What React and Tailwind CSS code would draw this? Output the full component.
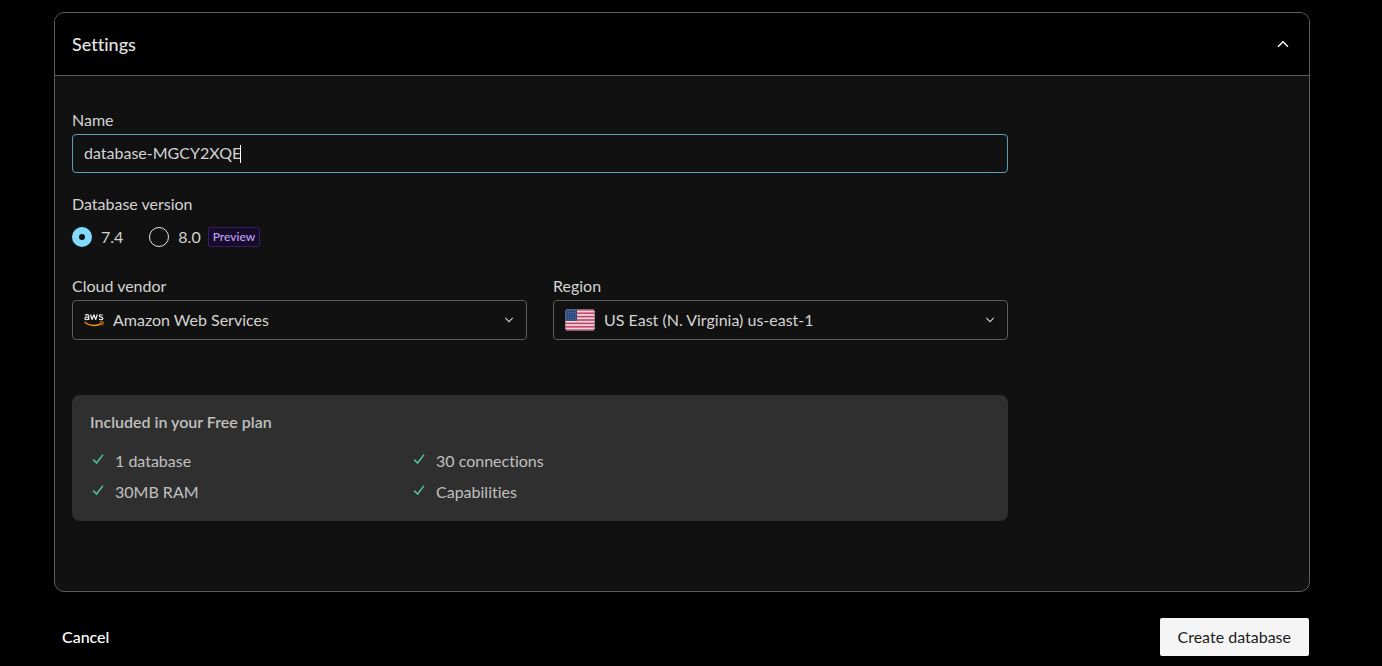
import { useState } from "react";

const INCLUDED = ["1 database", "30 connections", "30MB RAM", "Capabilities"];

function ChevronIcon({ className }) {
  return (
    <svg className={className} viewBox="0 0 12 8" fill="none" stroke="currentColor" aria-hidden="true">
      <path d="M1 1.2 6 6.2 11 1.2" strokeWidth="1.4" />
    </svg>
  );
}

function CheckIcon() {
  return (
    <svg className="mb-1 h-3 w-3" viewBox="0 0 12 12" fill="none" stroke="#4fc3a1" aria-hidden="true">
      <path d="M1.2 6.6 4.6 10 11 1.6" strokeWidth="1.5" />
    </svg>
  );
}

function AwsLogo() {
  return (
    <svg className="h-3.5 w-5" viewBox="0 0 40 28" fill="none" aria-hidden="true">
      <g stroke="#f2f2f2" strokeWidth="2.3" strokeLinejoin="round">
        <path d="M2 4.6C5 2.6 9.6 2.6 9.6 6.4V14M9.6 8.6C5.6 7.6 1.8 8 1.8 11C1.8 14.6 7.6 14.2 9.6 10.6" />
        <path d="M13 3 16.2 13 19.8 3.6 23.4 13 26.6 3" />
        <path d="M37.4 4.4C34.6 2.8 30.6 3.2 30.6 5.8C30.6 9 37.8 7.6 37.8 10.8C37.8 14 32.6 14 29.8 12.2" />
      </g>
      <path d="M1 18.6C11 26.6 26 27 35.6 20.6" stroke="#f79400" strokeWidth="2.8" />
      <path d="M31.6 18.4C34.4 17.4 37.4 17.2 38.4 18.2C39 19.6 38 22.6 36.2 24.8" stroke="#f79400" strokeWidth="2" />
    </svg>
  );
}

function UsFlag() {
  const stripes = [0, 2, 4, 6, 8, 10, 12];
  const stars = [];
  for (let row = 0; row < 5; row += 1) {
    for (let col = 0; col < 5; col += 1) {
      stars.push([1.6 + col * 2.2, 1.3 + row * 2.2]);
    }
  }

  return (
    <svg className="h-[22px] w-[30px] rounded-sm" viewBox="0 0 30 22" preserveAspectRatio="none" aria-hidden="true">
      <rect width="30" height="22" fill="#eedde3" />
      {stripes.map((n) => (
        <rect key={n} y={(n * 22) / 13} width="30" height={22 / 13} fill="#c4466a" />
      ))}
      <rect width="12" height="11.8" fill="#2b4a7e" />
      {stars.map(([x, y]) => (
        <circle key={`${x}-${y}`} cx={x} cy={y} r="0.4" fill="#9fb2d2" />
      ))}
      <rect x="0.5" y="0.5" width="29" height="21" rx="3.5" fill="none" stroke="#6f6f74" strokeOpacity="0.6" />
    </svg>
  );
}

function SelectField({ id, label, icon, option, selectClass }) {
  return (
    <div>
      <label htmlFor={id} className="block pb-[3px] leading-[22px]">
        {label}
      </label>
      <div className="relative">
        <span className="pointer-events-none absolute inset-y-0 left-3 flex items-center">{icon}</span>
        <select
          id={id}
          className={`h-10 w-full appearance-none rounded-sm border border-[#5c5c5c] bg-[#111111] pr-10 pb-px outline-none ${selectClass}`}
        >
          <option>{option}</option>
        </select>
        <span className="pointer-events-none absolute inset-y-0 right-3 flex w-3 items-center justify-center">
          <ChevronIcon className="h-1.5 w-2.5" />
        </span>
      </div>
    </div>
  );
}

function VersionRadio({ value, checked, onChange }) {
  return (
    <label className="flex items-center gap-[9px]">
      <input
        type="radio"
        name="version"
        value={value}
        checked={checked}
        onChange={onChange}
        className="h-5 w-5 appearance-none rounded-full border border-[#e8e8e8] checked:border-[7px] checked:border-[#80dbff] checked:bg-[#111111]"
      />
      {value}
    </label>
  );
}

function App() {
  const [name, setName] = useState("database-MGCY2XQE");
  const [version, setVersion] = useState("7.4");
  const [isOpen, setIsOpen] = useState(true);

  return (
    <main className="min-h-screen bg-black pt-3 pr-[72px] pb-2 pl-[54px] font-['Lato',sans-serif] text-base text-[#d4d4d4] [font-variant-ligatures:none]">
      <section className="overflow-hidden rounded-[10px] border border-[#5c5c5c] bg-[#111111]">
        <header className="flex h-[63px] items-center justify-between border-b border-[#5c5c5c] bg-black pr-5 pl-[17px]">
          <h2 className="text-lg font-medium text-[#e4e4e4]">Settings</h2>
          <button type="button" aria-label="Toggle settings" onClick={() => setIsOpen(!isOpen)}>
            <ChevronIcon className="h-2 w-3 rotate-180 text-white" />
          </button>
        </header>

        {isOpen && (
          <div className="px-[17px] pt-[33px] pb-[70px]">
            <div className="max-w-[936px]">
              <label htmlFor="name" className="block pb-[3px] leading-[22px]">
                Name
              </label>
              <div className="flex h-[39px] items-center rounded-sm border border-[#5b9fb5] pl-[11px]">
                <input
                  id="name"
                  value={name}
                  onChange={(event) => setName(event.target.value)}
                  className="field-sizing-content bg-transparent pb-0.5 caret-transparent outline-none"
                />
                <span className="-ml-px h-[18px] w-px bg-white" />
              </div>

              <fieldset className="mt-[18px]">
                <legend className="leading-[25px]">Database version</legend>
                <div className="mt-[9px] flex h-6 items-center">
                  <VersionRadio value="7.4" checked={version === "7.4"} onChange={() => setVersion("7.4")} />
                  <div className="ml-[26px] flex items-center gap-[7px]">
                    <VersionRadio value="8.0" checked={version === "8.0"} onChange={() => setVersion("8.0")} />
                    <span className="rounded-xs border border-[#34205e] bg-[#160b2b] px-1 text-xs leading-[18px] font-medium text-[#c4a4f5]">
                      Preview
                    </span>
                  </div>
                </div>
              </fieldset>

              <div className="mt-[26px] grid grid-cols-2 gap-[26px]">
                <SelectField
                  id="vendor"
                  label="Cloud vendor"
                  icon={<AwsLogo />}
                  option="Amazon Web Services"
                  selectClass="pl-10"
                />
                <SelectField
                  id="region"
                  label="Region"
                  icon={<UsFlag />}
                  option="US East (N. Virginia) us-east-1"
                  selectClass="pl-[50px]"
                />
              </div>

              <div className="mt-[55px] rounded-lg bg-[#2f2f2f] px-[18px] pt-[15px] pb-[17px] text-[#c0c0c0]">
                <h3 className="font-semibold">Included in your Free plan</h3>
                <ul className="mt-[15px] grid grid-cols-[321px_321px] gap-y-[7px]">
                  {INCLUDED.map((item) => (
                    <li key={item} className="flex items-center gap-[11px] pl-0.5">
                      <CheckIcon />
                      {item}
                    </li>
                  ))}
                </ul>
              </div>
            </div>
          </div>
        )}
      </section>

      <footer className="mt-[26px] flex items-center justify-between pr-px">
        <button type="button" className="px-2 font-medium text-white">
          Cancel
        </button>
        <button type="button" className="h-[38px] rounded-xs bg-[#f5f5f5] px-[18px] text-[#1c1c1c]">
          Create database
        </button>
      </footer>
    </main>
  );
}

export default App;
